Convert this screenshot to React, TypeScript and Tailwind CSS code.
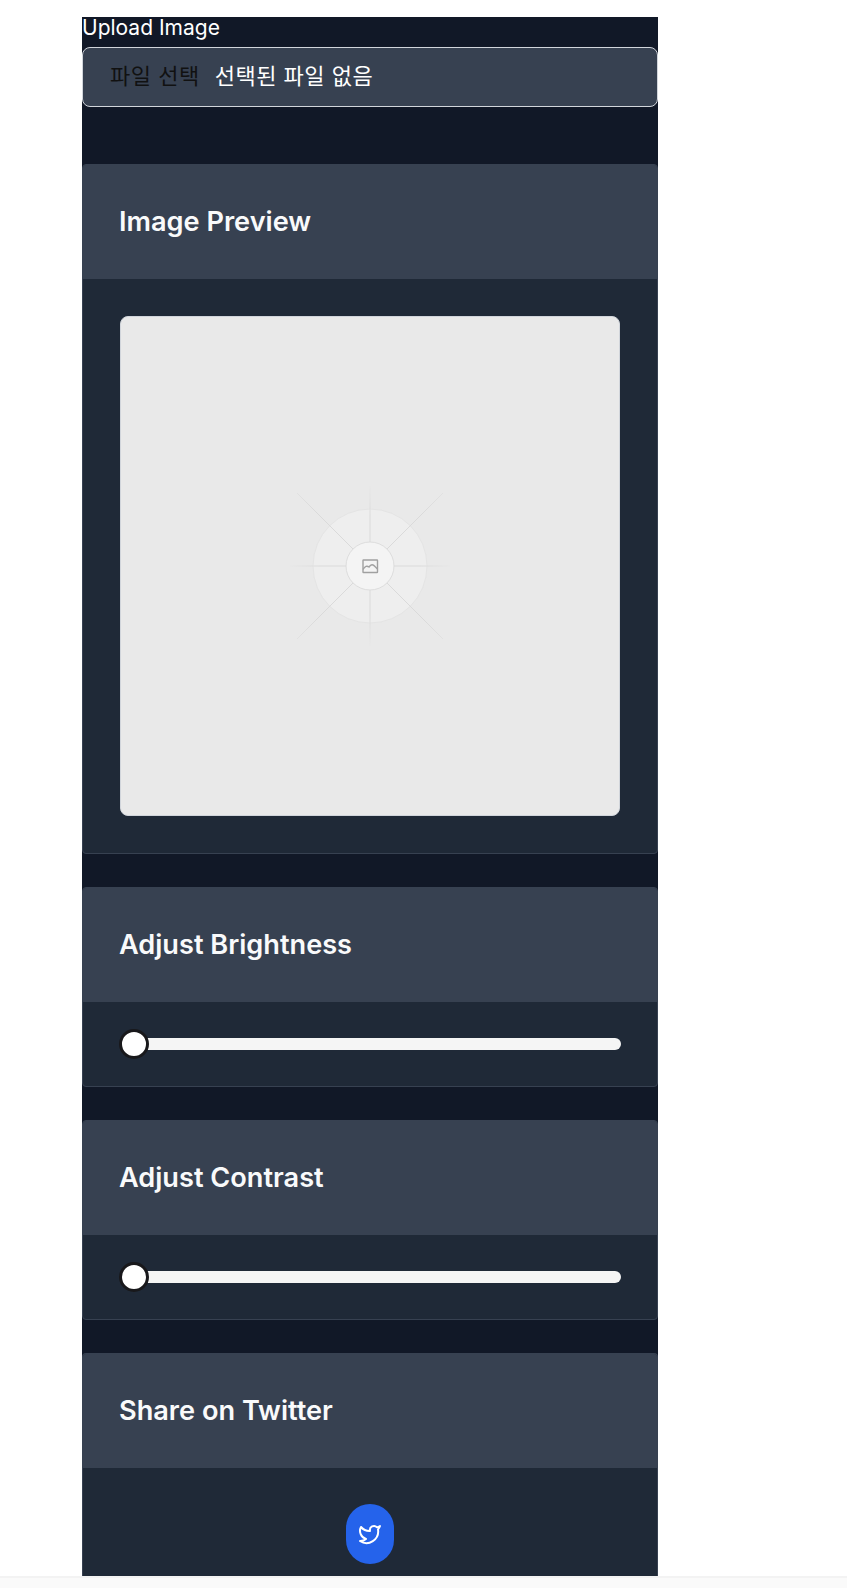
import React from 'react';
import { Twitter } from 'lucide-react';

const Card = ({ title, children }: { title: string; children: React.ReactNode }) => (
  <div className="overflow-hidden rounded-[4px] border border-[#374151] bg-[#1f2937]">
    <div className="bg-[#374151] px-[36px] py-[37px]">
      <h3 className="text-[27.15px] leading-[40px] font-semibold text-[#f9fafb]">{title}</h3>
    </div>
    {children}
  </div>
);

const Slider = () => (
  <div className="px-[36px] pt-[36px] pb-[36px] pl-[37px]">
    <div className="relative h-[12px] rounded-full bg-[#f5f5f5]">
      {/* thumb */}
      <div className="absolute top-[-9px] left-[-1px] h-[30px] w-[30px] rounded-full border-[3px] border-[#18181b] bg-white" />
    </div>
  </div>
);

const Placeholder = () => (
  <svg width="180" height="170" viewBox="0 0 180 170" fill="none">
    <defs>
      <radialGradient id="ray" gradientUnits="userSpaceOnUse" cx="90" cy="85" r="82">
        <stop offset="0.6" stopColor="#dadada" />
        <stop offset="1" stopColor="#e8e8e8" />
      </radialGradient>
      <radialGradient id="diag" gradientUnits="userSpaceOnUse" cx="90" cy="85" r="106">
        <stop offset="0.7" stopColor="#dadada" />
        <stop offset="1" stopColor="#e2e2e2" />
      </radialGradient>
    </defs>
    <circle cx="90" cy="85" r="57" fill="#eeeeee" stroke="#e4e4e4" />
    <path d="M90 61V5M90 109V165M66 85H10M114 85H170" stroke="url(#ray)" />
    <path d="M73 68L17 12M107 68L163 12M73 102L17 158M107 102L163 158" stroke="url(#diag)" />
    <circle cx="90" cy="85" r="24" fill="#f4f4f4" stroke="#dddddd" />
    <g stroke="#a0a0a0" strokeWidth="1.4">
      <rect x="83" y="79" width="14.5" height="12.5" rx="0.5" />
      <path d="M83 88.5C85 85 87 84.5 89 86C91 83 93 83 95 85.5L97.5 88" />
    </g>
  </svg>
);

export default function App() {
  return (
    <div className="flex min-h-[1588px] flex-col bg-white" style={{ fontFamily: 'Inter, "Noto Sans CJK KR", sans-serif' }}>
      <div className="h-[17px]" />
      <div className="ml-[82px] w-[576px] bg-[#111827]">
        <label className="block h-[30px] text-[21px] leading-[22px] text-white">Upload Image</label>
        <div className="flex h-[60px] items-center rounded-[8px] border border-[#d1d5db] bg-[#374151] pb-[1px] pl-[27px] text-[22px] tracking-[0.5px]">
          <span className="text-[#111111]">파일 선택</span>
          <span className="ml-[15px] text-white">선택된 파일 없음</span>
        </div>
        <div className="mt-[57px] flex flex-col gap-[33px]">
          <Card title="Image Preview">
            <div className="p-[37px]">
              <div className="flex h-[500px] w-[500px] items-center justify-center rounded-[8px] border border-[#d1d5db] bg-[#e9e9e9]">
                <Placeholder />
              </div>
            </div>
          </Card>
          <Card title="Adjust Brightness">
            <Slider />
          </Card>
          <Card title="Adjust Contrast">
            <Slider />
          </Card>
          <div className="overflow-hidden rounded-t-[4px] border-x border-t border-[#374151] bg-[#1f2937]">
            <div className="bg-[#374151] px-[36px] py-[37px]">
              <h3 className="text-[27.15px] leading-[40px] font-semibold text-[#f9fafb]">Share on Twitter</h3>
            </div>
            <div className="flex justify-center pt-[36px] pb-[12px]">
              <button className="flex h-[60px] w-[48px] items-center justify-center rounded-full bg-[#2563eb] text-white">
                <Twitter size={24} />
              </button>
            </div>
          </div>
        </div>
      </div>
      <div className="flex-1 border-t-2 border-[#f3f3f3] bg-[#fafafa]" />
    </div>
  );
}
